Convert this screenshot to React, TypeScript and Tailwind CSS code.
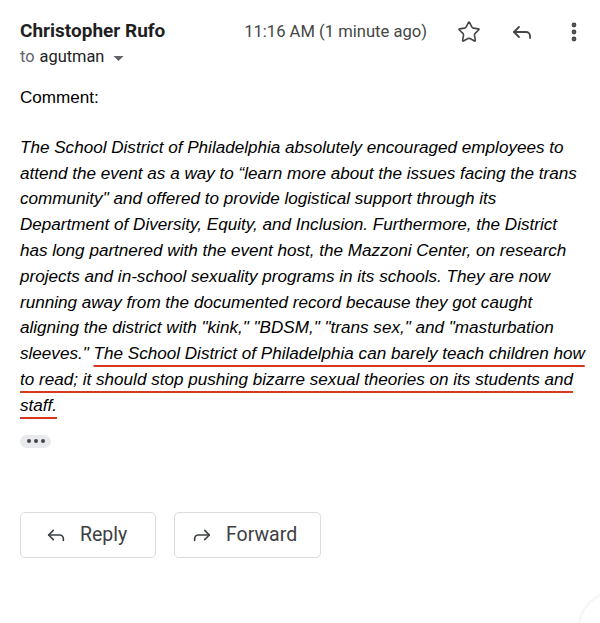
import { Star, Reply, Forward, MoreVertical } from "lucide-react"

export default function App() {
  return (
    <div className="relative w-[600px] h-[623px] overflow-hidden bg-white">
      <div className="px-5 pt-[17px] font-['Roboto',sans-serif]">
        <div className="flex items-start">
          <div className="flex-1">
            <div className="text-[19px] font-bold leading-[28px] text-[#1f1f1f]">Christopher Rufo</div>
            <div className="flex items-center text-[16.4px] leading-[24px] text-[#5f6368]">
              to <span className="ml-[5px] text-[#222]">agutman</span>
              <svg className="ml-[9px] mt-[2px]" width="11" height="5" viewBox="0 0 10 5">
                <path d="M0 0h10L5 5z" fill="#5f6368" />
              </svg>
            </div>
          </div>
          <div className="flex items-center pt-[2px]">
            <span className="text-[16.6px] leading-[26px] text-[#444746] mr-[30px]">11:16 AM (1 minute ago)</span>
            <Star className="h-[24px] w-[24px] text-[#444746] mr-[29px]" strokeWidth={1.6} />
            <Reply className="h-[24px] w-[24px] text-[#444746] mr-[28px]" strokeWidth={1.8} />
            <MoreVertical className="h-[24px] w-[24px] text-[#444746] mr-[-6px]" strokeWidth={2.8} />
          </div>
        </div>

        <div className="mt-[16px] -mr-[15px] font-['Liberation_Sans',Arial,sans-serif] text-[17.1px] leading-[25.8px] text-black">
          <div>Comment:</div>
          <p className="mt-[24px] italic whitespace-nowrap">
            The School District of Philadelphia absolutely encouraged employees to<br />
            attend the event as a way to “learn more about the issues facing the trans<br />
            community" and offered to provide logistical support through its<br />
            Department of Diversity, Equity, and Inclusion. Furthermore, the District<br />
            has long partnered with the event host, the Mazzoni Center, on research<br />
            projects and in-school sexuality programs in its schools. They are now<br />
            running away from the documented record because they got caught<br />
            aligning the district with "kink," "BDSM," "trans sex," and "masturbation<br />
            sleeves."{" "}
            <span className="underline decoration-[#d8381f] decoration-2 underline-offset-[6px]">
              The School District of Philadelphia can barely teach children how<br />
              to read; it should stop pushing bizarre sexual theories on its students and<br />
              staff.
            </span>
          </p>
        </div>

        <div className="mt-[16px] flex h-[13px] w-[31px] items-center justify-center gap-[3px] rounded-full bg-[#e8eaed]">
          <span className="h-[4px] w-[4px] rounded-full bg-[#444746]" />
          <span className="h-[4px] w-[4px] rounded-full bg-[#444746]" />
          <span className="h-[4px] w-[4px] rounded-full bg-[#444746]" />
        </div>

        <div className="mt-[64px] flex gap-[18px]">
          <button className="flex h-[46px] w-[136px] items-center rounded-[5px] border border-[#dadce0] pl-[24px] text-[19.5px] text-[#3c4043]">
            <Reply className="h-[22px] w-[22px] mr-[13px]" strokeWidth={1.8} />
            Reply
          </button>
          <button className="flex h-[46px] w-[147px] items-center rounded-[5px] border border-[#dadce0] pl-[16px] text-[19.5px] text-[#3c4043]">
            <Forward className="h-[22px] w-[22px] mr-[13px]" strokeWidth={1.8} />
            Forward
          </button>
        </div>
      </div>
      <div className="absolute right-[-50px] bottom-[-40px] h-[70px] w-[70px] rounded-full bg-white shadow-[0_0_4px_rgba(0,0,0,0.12)]" />
    </div>
  )
}
